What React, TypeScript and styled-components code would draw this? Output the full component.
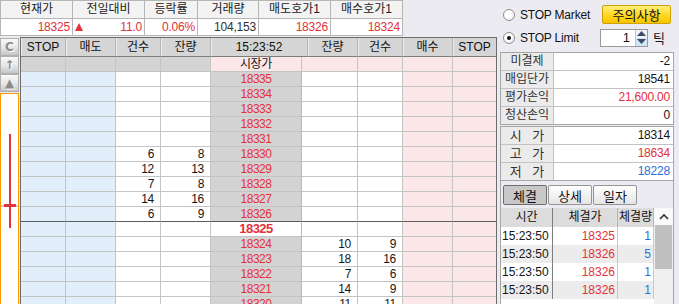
import React from 'react'
import styled, { createGlobalStyle } from 'styled-components'

const RED = '#e2323a'
const BLUE = '#2c6fd8'
const INK = '#161616'
const FONT = `"Liberation Sans", "Noto Sans CJK KR", sans-serif`

type Pair = [string, string]

const quotes = [
    { label: '현재가', value: '18325', color: RED },
    { label: '전일대비', value: '11.0', color: RED, arrow: true },
    { label: '등락률', value: '0.06%', color: RED },
    { label: '거래량', value: '104,153', color: '#333' },
    { label: '매도호가1', value: '18326', color: RED },
    { label: '매수호가1', value: '18324', color: RED }
]

const bookHeaders = [
    { label: 'STOP' },
    { label: '매도' },
    { label: '건수' },
    { label: '잔량' },
    { label: '15:23:52', span: 2 },
    { label: '잔량' },
    { label: '건수' },
    { label: '매수' },
    { label: 'STOP', last: true }
]

const askSide: Record<number, Pair> = {
    18330: ['6', '8'],
    18329: ['12', '13'],
    18328: ['7', '8'],
    18327: ['14', '16'],
    18326: ['6', '9']
}

const bidSide: Record<number, Pair> = {
    18324: ['10', '9'],
    18323: ['18', '16'],
    18322: ['7', '6'],
    18321: ['14', '9'],
    18320: ['11', '11']
}

const CURRENT = 18325
const prices = Array.from({ length: 16 }, (_, i) => 18335 - i)

const position = [
    { label: '미결제', value: '-2' },
    { label: '매입단가', value: '18541' },
    { label: '평가손익', value: '21,600.00', color: RED },
    { label: '청산손익', value: '0' }
]

const dayRange = [
    { label: '시 가', value: '18314' },
    { label: '고 가', value: '18634', color: RED },
    { label: '저 가', value: '18228', color: BLUE }
]

const ticks = [
    { time: '15:23:50', price: '18325', qty: '1' },
    { time: '15:23:50', price: '18326', qty: '5' },
    { time: '15:23:50', price: '18326', qty: '1' },
    { time: '15:23:50', price: '18326', qty: '1' }
]

const BookRow: React.FunctionComponent<{ price: number }> = ({ price }) => {
    const ask = askSide[price]
    const bid = bidSide[price]
    const divider = price === CURRENT + 1

    return (
        <>
            <Cell $tone="blue" $divider={divider} />
            <Cell $tone="blue" $divider={divider} />
            <Cell $tone="white" $divider={divider}>{ask?.[0]}</Cell>
            <Cell $tone="white" $divider={divider}>{ask?.[1]}</Cell>
            <PriceCell $current={price === CURRENT} $divider={divider}>
                {price}
            </PriceCell>
            <Cell $tone="white" $divider={divider} />
            <Cell $tone="white" $divider={divider}>{bid?.[0]}</Cell>
            <Cell $tone="white" $divider={divider}>{bid?.[1]}</Cell>
            <Cell $tone="pink" $divider={divider} />
            <Cell $tone="pink" $divider={divider} $last />
        </>
    )
}

export default function App() {
    return (
        <>
            <GlobalStyle />
            <Screen>
                <Main>
                    <QuoteBar>
                        <QuoteTable>
                            {quotes.map(q => (
                                <QuoteHead key={q.label}>{q.label}</QuoteHead>
                            ))}
                            {quotes.map(q => (
                                <QuoteValue key={q.label} $color={q.color}>
                                    {q.arrow && <UpMark />}
                                    <span>{q.value}</span>
                                </QuoteValue>
                            ))}
                        </QuoteTable>
                    </QuoteBar>
                    <BookArea>
                        <SideTools>
                            <ToolButton>C</ToolButton>
                            <ToolButton>↑</ToolButton>
                            <ToolButton>▲</ToolButton>
                            <ChartBox>
                                <svg width="17" height="200">
                                    <rect x="0" y="111" width="17" height="2" fill="#cdc9df" />
                                    <rect x="8" y="40" width="2" height="94" fill="#e0343c" />
                                    <rect x="3" y="110" width="12" height="3" fill="#e0343c" />
                                </svg>
                            </ChartBox>
                        </SideTools>
                        <Book>
                            {bookHeaders.map((h, i) => (
                                <HeadCell key={i} $span={h.span ?? 1} $last={h.last}>
                                    {h.label}
                                </HeadCell>
                            ))}
                            <Cell $tone="gray" />
                            <Cell $tone="gray" />
                            <Cell $tone="gray" />
                            <Cell $tone="gray" />
                            <Cell $tone="pink" $align="center" $ink={INK}>시장가</Cell>
                            <Cell $tone="pink" />
                            <Cell $tone="pink" />
                            <Cell $tone="pink" />
                            <Cell $tone="pink" />
                            <Cell $tone="pink" $last />
                            {prices.map(p => (
                                <BookRow key={p} price={p} />
                            ))}
                        </Book>
                    </BookArea>
                </Main>
                <Panel>
                    <OptionRow>
                        <Radio />
                        <OptionLabel>STOP Market</OptionLabel>
                        <NoticeButton>주의사항</NoticeButton>
                    </OptionRow>
                    <OptionRow>
                        <Radio $checked />
                        <OptionLabel>STOP Limit</OptionLabel>
                        <Spinner>
                            <SpinValue>1</SpinValue>
                            <SpinButtons>
                                <SpinHalf>
                                    <svg width="9" height="5"><path d="M0 5 L4.5 0 L9 5 Z" fill="#3c4a66" /></svg>
                                </SpinHalf>
                                <SpinHalf $down>
                                    <svg width="9" height="5"><path d="M0 0 L4.5 5 L9 0 Z" fill="#3c4a66" /></svg>
                                </SpinHalf>
                            </SpinButtons>
                        </Spinner>
                        <TickUnit>틱</TickUnit>
                    </OptionRow>
                    <InfoGrid>
                        {position.map(r => (
                            <React.Fragment key={r.label}>
                                <InfoLabel>{r.label}</InfoLabel>
                                <InfoValue $color={r.color}>{r.value}</InfoValue>
                            </React.Fragment>
                        ))}
                    </InfoGrid>
                    <InfoGrid $spaced>
                        {dayRange.map(r => (
                            <React.Fragment key={r.label}>
                                <InfoLabel $wide>{r.label}</InfoLabel>
                                <InfoValue $color={r.color}>{r.value}</InfoValue>
                            </React.Fragment>
                        ))}
                    </InfoGrid>
                    <TradeFrame>
                        <Tabs>
                            <TabButton $active>체결</TabButton>
                            <TabButton>상세</TabButton>
                            <TabButton>일자</TabButton>
                        </Tabs>
                        <TradeList>
                            <TradeTable>
                                <TradeHead $strong>시간</TradeHead>
                                <TradeHead>체결가</TradeHead>
                                <TradeHead>체결량</TradeHead>
                                {ticks.map((t, i) => (
                                    <React.Fragment key={i}>
                                        <TradeCell $alt={i % 2 === 1} $align="left" $strong>
                                            {t.time}
                                        </TradeCell>
                                        <TradeCell $alt={i % 2 === 1} $color={RED}>{t.price}</TradeCell>
                                        <TradeCell $alt={i % 2 === 1} $color={BLUE}>{t.qty}</TradeCell>
                                    </React.Fragment>
                                ))}
                            </TradeTable>
                            <ScrollBar>
                                <ScrollArrow>
                                    <svg width="10" height="7">
                                        <path d="M1 6 L5 2 L9 6" stroke="#333" strokeWidth="1.6" fill="none" />
                                    </svg>
                                </ScrollArrow>
                                <ScrollThumb />
                            </ScrollBar>
                        </TradeList>
                    </TradeFrame>
                </Panel>
            </Screen>
        </>
    )
}

const GlobalStyle = createGlobalStyle`
    html, body {
        margin: 0;
        padding: 0;
        background: #ebebf1;
    }
    body {
        font-family: ${FONT};
        font-size: 12px;
        color: ${INK};
    }
    * {
        box-sizing: border-box;
    }
`

const Screen = styled.div`
    width: 679px;
    height: 304px;
    overflow: hidden;
    display: flex;
    background: #ebebf1;
`

const Main = styled.div`
    width: 497px;
    display: flex;
    flex-direction: column;
`

const QuoteBar = styled.div`
    height: 37px;
    flex-shrink: 0;
`

const QuoteTable = styled.div`
    display: grid;
    grid-template-columns: 71px 71px 52px 60px 71px 71px;
    grid-template-rows: 17px 16px;
    gap: 1px;
    width: max-content;
    background: #b6b6b6;
    border: 1px solid #b6b6b6;
`

const QuoteHead = styled.div`
    background: #f3f3f3;
    text-align: center;
    line-height: 17px;
    color: #222;
`

const QuoteValue = styled.div<{ $color: string }>`
    display: flex;
    align-items: center;
    background: #fff;
    padding: 0 2px;
    color: ${({ $color }) => $color};
    letter-spacing: -0.2px;
    line-height: 16px;

    span {
        margin-left: auto;
    }
`

const UpMark = styled.i`
    width: 0;
    height: 0;
    border-left: 4px solid transparent;
    border-right: 4px solid transparent;
    border-bottom: 8px solid ${RED};
`

const BookArea = styled.div`
    flex: 1;
    min-height: 0;
    display: flex;
`

const SideTools = styled.div`
    width: 20px;
    padding-top: 1px;
    display: flex;
    flex-direction: column;
`

const ToolButton = styled.div`
    width: 19px;
    height: 18px;
    display: flex;
    align-items: center;
    justify-content: center;
    border: 1px solid #b0b0b0;
    background: linear-gradient(#f8f8f8, #e6e6e6 55%, #c6c6c6);
    color: #8c8c8c;
    font-family: "DejaVu Sans", sans-serif;
    font-weight: bold;
    font-size: 12px;
    text-shadow: 1px 1px 0 #fff;
`

const ChartBox = styled.div`
    flex: 1;
    width: 19px;
    margin-top: 1px;
    border: 1px solid #ff9900;
    border-bottom: none;
    background: #fff;
    overflow: hidden;

    svg {
        display: block;
    }
`

const Book = styled.div`
    width: 477px;
    align-self: flex-start;
    display: grid;
    grid-template-columns: 45px 50px 45px 50px 91px 6px 50px 45px 50px 43px;
    grid-template-rows: 19px;
    grid-auto-rows: 15px;
    border: 1px solid #6c6c6c;
    border-bottom: none;
`

const HeadCell = styled.div<{ $span: number; $last?: boolean }>`
    grid-column: span ${({ $span }) => $span};
    background: #d5d5d5;
    border-right: ${({ $last }) => ($last ? 'none' : '1px solid #b4b4b4')};
    border-bottom: 1px solid #7c7c7c;
    box-shadow: inset 1px 0 0 #ececec;
    text-align: center;
    line-height: 18px;
    color: #111;
`

const tones = {
    blue: '#e3eefb',
    white: '#ffffff',
    gray: '#d4d4d4',
    pink: '#fbe6e8'
}

const Cell = styled.div<{
    $tone: keyof typeof tones
    $divider?: boolean
    $last?: boolean
    $align?: 'center' | 'right'
    $ink?: string
}>`
    background: ${({ $tone }) => tones[$tone]};
    border-right: ${({ $last }) => ($last ? 'none' : '1px solid #c4c4c4')};
    border-bottom: 1px solid ${({ $divider }) => ($divider ? '#5c5c5c' : '#c4c4c4')};
    text-align: ${({ $align }) => $align ?? 'right'};
    padding-right: ${({ $align }) => ($align === 'center' ? '0' : '6px')};
    letter-spacing: -0.3px;
    line-height: 14px;
    color: ${({ $ink }) => $ink ?? INK};
    white-space: nowrap;
    overflow: hidden;
`

const PriceCell = styled.div<{ $current: boolean; $divider: boolean }>`
    background: ${({ $current }) => ($current ? '#fff' : '#d3d3d3')};
    border-right: 1px solid #b8b8b8;
    border-bottom: 1px solid ${({ $divider }) => ($divider ? '#5c5c5c' : '#c4c4c4')};
    text-align: center;
    line-height: 14px;
    color: ${RED};
    font-weight: ${({ $current }) => ($current ? 'bold' : 'normal')};
    font-size: ${({ $current }) => ($current ? '13px' : '12px')};
    letter-spacing: -0.5px;
`

const Panel = styled.div`
    width: 182px;
    display: flex;
    flex-direction: column;
    padding: 4px 5px 0 3px;
`

const OptionRow = styled.div`
    height: 21px;
    display: flex;
    align-items: center;
    margin-bottom: 2px;
`

const Radio = styled.span<{ $checked?: boolean }>`
    position: relative;
    flex-shrink: 0;
    width: 12px;
    height: 12px;
    margin-left: 3px;
    border-radius: 50%;
    border: 1px solid #8e8e8e;
    background: radial-gradient(circle at 40% 40%, #ffffff 40%, #dedede);

    &::after {
        content: '';
        display: ${({ $checked }) => ($checked ? 'block' : 'none')};
        position: absolute;
        left: 3px;
        top: 3px;
        width: 4px;
        height: 4px;
        border-radius: 50%;
        background: #111;
    }
`

const OptionLabel = styled.span`
    flex-shrink: 0;
    margin-left: 5px;
    letter-spacing: -0.2px;
    white-space: nowrap;
    color: #111;
`

const NoticeButton = styled.div`
    flex-shrink: 0;
    margin-left: auto;
    margin-right: 3px;
    width: 69px;
    height: 19px;
    display: flex;
    align-items: center;
    justify-content: center;
    border: 1px solid #cfa200;
    border-radius: 2px;
    background: linear-gradient(#fff07a, #ffd51c 60%, #f6c400);
    color: #111;
    font-size: 13px;
`

const Spinner = styled.div`
    flex-shrink: 0;
    margin-left: auto;
    width: 48px;
    height: 18px;
    display: flex;
    border: 1px solid #9a9a9a;
    background: #fff;
`

const SpinValue = styled.div`
    flex: 1;
    text-align: right;
    padding-right: 5px;
    font-size: 13px;
    line-height: 16px;
`

const SpinButtons = styled.div`
    width: 12px;
    display: flex;
    flex-direction: column;
    border-left: 1px solid #c0c0c0;
`

const SpinHalf = styled.div<{ $down?: boolean }>`
    flex: 1;
    display: flex;
    align-items: center;
    justify-content: center;
    background: ${({ $down }) => ($down ? '#cfe5f8' : '#eef2f6')};

    svg {
        display: block;
    }
`

const TickUnit = styled.span`
    margin: 0 9px 0 5px;
    font-size: 13px;
`

const InfoGrid = styled.div<{ $spaced?: boolean }>`
    display: grid;
    grid-template-columns: 52px 1fr;
    grid-auto-rows: 17px;
    gap: 1px;
    margin-top: ${({ $spaced }) => ($spaced ? '1px' : '2px')};
    background: #c2c2c2;
    border: 1px solid #a6a6a6;
`

const InfoLabel = styled.div<{ $wide?: boolean }>`
    background: #ebebeb;
    text-align: center;
    line-height: 17px;
    color: #333;
    font-size: ${({ $wide }) => ($wide ? '13px' : '12px')};
    word-spacing: ${({ $wide }) => ($wide ? '7px' : '0')};
`

const InfoValue = styled.div<{ $color?: string }>`
    background: #fff;
    text-align: right;
    padding-right: 3px;
    letter-spacing: -0.2px;
    line-height: 17px;
    color: ${({ $color }) => $color ?? INK};
`

const TradeFrame = styled.div`
    flex: 1;
    display: flex;
    flex-direction: column;
    border: 1px solid #a6a6a6;
    border-top: none;
    border-bottom: none;
`

const Tabs = styled.div`
    display: flex;
    gap: 1px;
    padding: 4px 0 3px 2px;
`

const TabButton = styled.div<{ $active?: boolean }>`
    width: 44px;
    height: 20px;
    display: flex;
    align-items: center;
    justify-content: center;
    border: 1px solid ${({ $active }) => ($active ? '#6e6e6e' : '#959595')};
    border-radius: 2px;
    background: ${({ $active }) => ($active ? '#c8c8c8' : 'linear-gradient(#ffffff, #e4e4e4)')};
    color: #111;
    font-size: 13px;
`

const TradeList = styled.div`
    flex: 1;
    display: flex;
    background: #fff;
`

const TradeTable = styled.div`
    flex: 1;
    display: grid;
    grid-template-columns: 52px 65px 36px;
    grid-template-rows: 19px;
    grid-auto-rows: 18px;
    align-content: start;
`

const TradeHead = styled.div<{ $strong?: boolean }>`
    background: #dcdcdc;
    text-align: center;
    line-height: 19px;
    border-right: 1px solid ${({ $strong }) => ($strong ? '#7e7e7e' : '#b8b8b8')};
    color: #111;
    white-space: nowrap;
    overflow: hidden;
`

const TradeCell = styled.div<{ $alt: boolean; $align?: 'left'; $strong?: boolean; $color?: string }>`
    background: ${({ $alt }) => ($alt ? '#ececec' : '#fff')};
    text-align: ${({ $align }) => $align ?? 'right'};
    padding: 0 2px 0 1px;
    line-height: 18px;
    border-right: 1px solid ${({ $strong }) => ($strong ? '#7e7e7e' : '#c8c8c8')};
    color: ${({ $color }) => $color ?? INK};
    white-space: nowrap;
    overflow: hidden;
`

const ScrollBar = styled.div`
    width: 19px;
    flex-shrink: 0;
    display: flex;
    flex-direction: column;
    background: #f0f0f0;
`

const ScrollArrow = styled.div`
    height: 17px;
    display: flex;
    align-items: center;
    justify-content: center;
    background: #fafafa;
`

const ScrollThumb = styled.div`
    height: 44px;
    margin: 0 1px;
    background: #c0c0c0;
`
